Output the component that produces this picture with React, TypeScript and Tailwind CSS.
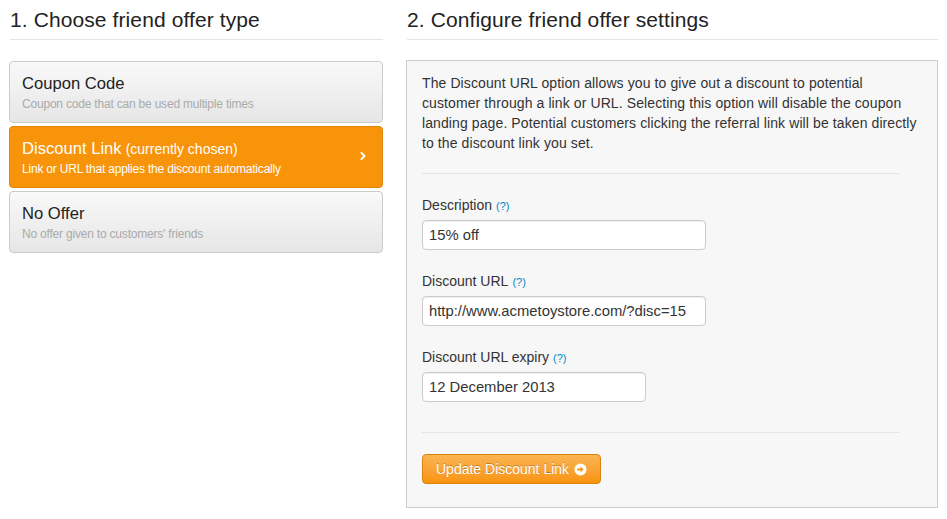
import { ChevronRight } from 'lucide-react';

const offers = [
  { title: 'Coupon Code', sub: 'Coupon code that can be used multiple times', active: false },
  { title: 'Discount Link', note: '(currently chosen)', sub: 'Link or URL that applies the discount automatically', active: true },
  { title: 'No Offer', sub: "No offer given to customers' friends", active: false },
];

const fields = [
  { label: 'Description', value: '15% off', width: 'w-[284px]' },
  { label: 'Discount URL', value: 'http://www.acmetoystore.com/?disc=15', width: 'w-[284px]' },
  { label: 'Discount URL expiry', value: '12 December 2013', width: 'w-[224px]' },
];

function Help() {
  return <span className="ml-1 text-[11px] text-[#0088cc]">(?)</span>;
}

export default function App() {
  return (
    <div className="flex gap-[23px] w-[947px] h-[519px] bg-white pl-[9px] pr-[9px] text-[#333] font-['Liberation_Sans',Arial,sans-serif]">
      {/* Left column */}
      <div className="w-[374px] shrink-0">
        <h2 className="pt-[7px] pl-[1px] text-[21px] leading-[26px] tracking-[0.1px] text-[#222]">1. Choose friend offer type</h2>
        <div className="mt-[6px] ml-[1px] border-t border-[#e5e5e5]" />

        <div className="mt-[21px] flex flex-col gap-[3px]">
          {offers.map(o => (
            <div
              key={o.title}
              className={`relative h-[62px] rounded-[4px] border px-[12px] pt-[12px] ${
                o.active
                  ? 'border-[#e08505] bg-[#f8940a] text-white'
                  : 'border-[#cccccc] bg-gradient-to-b from-[#f9f9f9] to-[#e6e6e6] text-[#222]'
              }`}
            >
              <div className="text-[16.6px] leading-[20px]">
                {o.title}
                {o.note && <span className="ml-1 text-[14px]">{o.note}</span>}
              </div>
              <div className={`mt-[2px] text-[12px] leading-[16px] tracking-[-0.2px] ${o.active ? 'text-white' : 'text-[#aaaaaa]'}`}>
                {o.sub}
              </div>
              {o.active && (
                <ChevronRight className="absolute right-[13px] top-[23px] w-[12px] h-[12px] text-white" strokeWidth={4} />
              )}
            </div>
          ))}
        </div>
      </div>

      {/* Right column */}
      <div className="flex-1">
        <h2 className="pt-[7px] pl-[1px] text-[21px] leading-[26px] tracking-[0.1px] text-[#222]">2. Configure friend offer settings</h2>
        <div className="mt-[6px] ml-[1px] border-t border-[#e5e5e5]" />

        <div className="mt-[20px] h-[448px] border border-[#cccccc] bg-[#f7f7f7] px-[15px] pt-[12px]">
          <p className="w-[500px] text-[14px] leading-[20px] tracking-[0.1px] text-[#333]">
            The Discount URL option allows you to give out a discount to potential customer through a link or URL. Selecting this option will disable the coupon landing page. Potential customers clicking the referral link will be taken directly to the discount link you set.
          </p>
          <div className="mt-[20px] mr-[22px] border-t border-[#e5e5e5]" />

          <div className="mt-[21px] flex flex-col gap-[21px]">
            {fields.map(f => (
              <div key={f.label}>
                <label className="block text-[14px] leading-[20px] text-[#333]">
                  {f.label}
                  <Help />
                </label>
                <div
                  className={`mt-[4px] h-[30px] ${f.width} rounded-[4px] border border-[#cccccc] bg-white px-[6px] text-[14.8px] leading-[28px] text-[#333] shadow-[inset_0_1px_1px_rgba(0,0,0,0.075)]`}
                >
                  {f.value}
                </div>
              </div>
            ))}
          </div>

          <div className="mt-[30px] mr-[22px] border-t border-[#e5e5e5]" />

          <button className="mt-[21px] flex h-[30px] items-center gap-[5px] rounded-[4px] border border-[#d9820c] bg-gradient-to-b from-[#fbb450] to-[#f89406] px-[13px] text-[14px] text-white [text-shadow:0_-1px_0_rgba(0,0,0,0.25)]">
            Update Discount Link
            <svg width="13" height="13" viewBox="0 0 14 14">
              <circle cx="7" cy="7" r="6.5" fill="white" />
              <path d="M3.5 6h3.5V3.8L10.4 7 7 10.2V8H3.5z" fill="#f8980f" />
            </svg>
          </button>
        </div>
      </div>
    </div>
  );
}
